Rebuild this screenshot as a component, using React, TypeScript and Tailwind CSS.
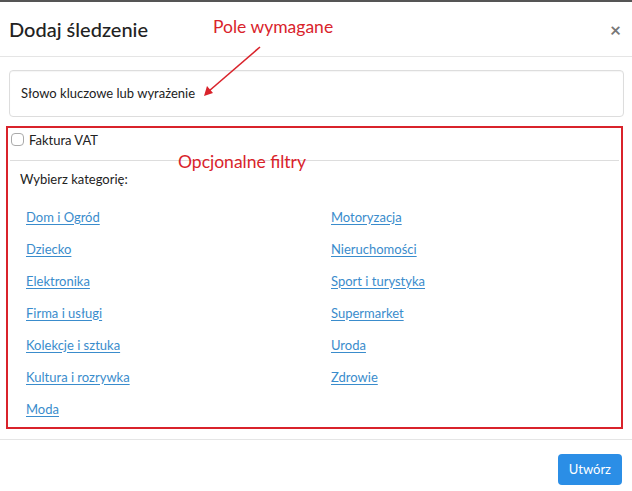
import React from "react";

const left = [
  "Dom i Ogród",
  "Dziecko",
  "Elektronika",
  "Firma i usługi",
  "Kolekcje i sztuka",
  "Kultura i rozrywka",
  "Moda",
];

const right = [
  "Motoryzacja",
  "Nieruchomości",
  "Sport i turystyka",
  "Supermarket",
  "Uroda",
  "Zdrowie",
];

const CategoryLink = ({ label }: { label: string }) => (
  <div className="h-8">
    <a
      href="#"
      className="text-[13px] text-[#3a8ccc] underline decoration-[#3a8ccc] underline-offset-2"
    >
      {label}
    </a>
  </div>
);

export default function App() {
  return (
    <div
      className="relative h-[491px] w-[632px] overflow-hidden border-t-2 border-[#555] bg-white text-[#222]"
      style={{ fontFamily: "Lato, 'Noto Sans', sans-serif" }}
    >
      {/* header */}
      <div className="flex h-[55px] items-center justify-between border-b border-[#e5e5e5] pl-[9px] pr-[11px]">
        <h4 className="text-[20px] font-medium text-[#222]">Dodaj śledzenie</h4>
        <span className="text-[19px] font-bold leading-none text-[#777]">×</span>
      </div>

      {/* body */}
      <div className="pl-[6px] pr-[9px] pt-[13px]">
        <div className="ml-[3px] mr-[-1px] flex h-[47px] items-center rounded border border-[#ddd] px-[11px] text-[13px] shadow-[inset_0_1px_1px_rgba(0,0,0,0.04)]">
          Słowo kluczowe lub wyrażenie
        </div>

        <div className="mt-[9px] h-[303px] border-2 border-[#d9232b] px-[2px]">
          <label className="flex h-[33px] items-start gap-[5px] border-b border-[#ddd] pl-[1px] pt-[3px] text-[13px] leading-[18px]">
            <span className="mt-[2px] inline-block h-[13px] w-[13px] rounded-[4px] border border-[#aaa] bg-white" />
            Faktura VAT
          </label>
          <div className="px-[10px] pt-[9px] text-[13px]">Wybierz kategorię:</div>
          <div className="mt-[14px] flex pl-[16px]">
            <div className="w-[305px]">
              {left.map((l) => (
                <CategoryLink key={l} label={l} />
              ))}
            </div>
            <div>
              {right.map((l) => (
                <CategoryLink key={l} label={l} />
              ))}
            </div>
          </div>
        </div>
      </div>

      {/* footer */}
      <div className="mt-[10px] flex justify-end border-t border-[#e5e5e5] px-[10px] pt-[14px]">
        <button className="h-[31px] rounded-[4px] bg-[#2b8ee6] px-[11px] text-[13px] text-white">
          Utwórz
        </button>
      </div>

      {/* annotations */}
      <div className="absolute left-[213px] top-[12px] text-[17.5px] text-[#d9232b]">
        Pole wymagane
      </div>
      <div className="absolute left-[178px] top-[147px] text-[17.5px] text-[#d9232b]">
        Opcjonalne filtry
      </div>
      <svg
        className="absolute left-0 top-0"
        width="632"
        height="491"
        viewBox="0 0 632 491"
      >
        <line x1="260" y1="45" x2="209" y2="89" stroke="#d9232b" strokeWidth="1.6" />
        <polygon points="204,94 207,84 213,91" fill="#d9232b" />
      </svg>
    </div>
  );
}
